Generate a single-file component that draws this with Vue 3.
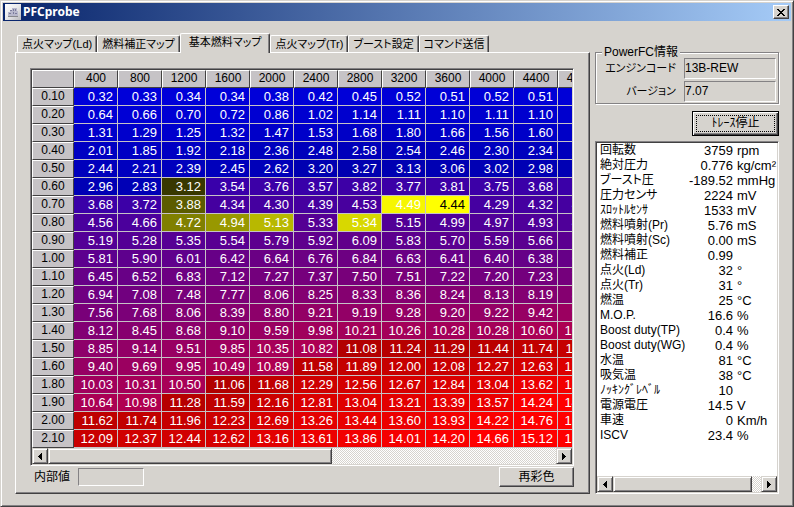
<script setup>
import { ref } from 'vue'

const tabs = ['点火マップ(Ld)', '燃料補正マップ', '基本燃料マップ', '点火マップ(Tr)', 'ブースト設定', 'コマンド送信']
const active = ref(2)
const version = ref('7.07')
const engine = ref('13B-REW')
const inner = ref('')

const rpm = [400, 800, 1200, 1600, 2000, 2400, 2800, 3200, 3600, 4000, 4400, 4800]
const rows = `0.10 0.32 0.33 0.34 0.34 0.38 0.42 0.45 0.52 0.51 0.52 0.51 0.53
0.20 0.64 0.66 0.70 0.72 0.86 1.02 1.14 1.11 1.10 1.11 1.10 1.12
0.30 1.31 1.29 1.25 1.32 1.47 1.53 1.68 1.80 1.66 1.56 1.60 1.62
0.40 2.01 1.85 1.92 2.18 2.36 2.48 2.58 2.54 2.46 2.30 2.34 2.40
0.50 2.44 2.21 2.39 2.45 2.62 3.20 3.27 3.13 3.06 3.02 2.98 2.99
0.60 2.96 2.83 3.12 3.54 3.76 3.57 3.82 3.77 3.81 3.75 3.68 3.70
0.70 3.68 3.72 3.88 4.34 4.30 4.39 4.53 4.49 4.44 4.29 4.32 4.34
0.80 4.56 4.66 4.72 4.94 5.13 5.33 5.34 5.15 4.99 4.97 4.93 4.95
0.90 5.19 5.28 5.35 5.54 5.79 5.92 6.09 5.83 5.70 5.59 5.66 5.70
1.00 5.81 5.90 6.01 6.42 6.64 6.76 6.84 6.63 6.41 6.40 6.38 6.40
1.10 6.45 6.52 6.83 7.12 7.27 7.37 7.50 7.51 7.22 7.20 7.23 7.30
1.20 6.94 7.08 7.48 7.77 8.06 8.25 8.33 8.36 8.24 8.13 8.19 8.30
1.30 7.56 7.68 8.06 8.39 8.80 9.21 9.19 9.28 9.20 9.22 9.42 9.70
1.40 8.12 8.45 8.68 9.10 9.59 9.98 10.21 10.26 10.28 10.28 10.60 10.80
1.50 8.85 9.14 9.51 9.85 10.35 10.82 11.08 11.24 11.29 11.44 11.74 11.90
1.60 9.40 9.69 9.95 10.49 10.89 11.58 11.89 12.00 12.08 12.27 12.63 12.90
1.80 10.03 10.31 10.50 11.06 11.68 12.29 12.56 12.67 12.84 13.04 13.62 13.90
1.90 10.64 10.98 11.28 11.59 12.16 12.81 13.04 13.21 13.39 13.57 14.24 14.50
2.00 11.62 11.74 11.96 12.23 12.69 13.26 13.44 13.60 13.93 14.22 14.76 15.00
2.10 12.09 12.37 12.44 12.62 13.16 13.61 13.86 14.01 14.20 14.66 15.12 15.40`
  .split('\n')
  .map((line) => {
    const [load, ...values] = line.split(' ')
    return { load, values }
  })

// Recently visited cells, brightest is the current one
const trace = {
  '0.60/2': 'rgb(56, 56, 0)',
  '0.70/2': 'rgb(92, 92, 0)',
  '0.80/2': 'rgb(128, 128, 0)',
  '0.80/3': 'rgb(152, 152, 0)',
  '0.80/4': 'rgb(184, 184, 0)',
  '0.80/6': 'rgb(216, 216, 0)',
  '0.70/7': 'rgb(246, 246, 0)',
  '0.70/8': 'rgb(255, 255, 0)',
}

function cellColor(load, col, text) {
  const hit = trace[`${load}/${col}`]
  if (hit) return hit
  const v = Number(text)
  if (v < 3.3) return `rgb(0, 0, ${Math.round(222 - v * 14)})`
  if (v < 11) return `rgb(${Math.round(v * 16)}, 0, ${Math.round(212 - v * 12)})`
  return `rgb(${Math.min(255, Math.round(176 + (v - 11) * 23))}, 0, 0)`
}

const sensors = [
  ['回転数', '3759', 'rpm'],
  ['絶対圧力', '0.776', 'kg/cm²'],
  ['ブースト圧', '-189.52', 'mmHg'],
  ['圧力センサ', '2224', 'mV'],
  ['ｽﾛｯﾄﾙｾﾝｻ', '1533', 'mV'],
  ['燃料噴射(Pr)', '5.76', 'mS'],
  ['燃料噴射(Sc)', '0.00', 'mS'],
  ['燃料補正', '0.99', ''],
  ['点火(Ld)', '32', '°'],
  ['点火(Tr)', '31', '°'],
  ['燃温', '25', '°C'],
  ['M.O.P.', '16.6', '%'],
  ['Boost duty(TP)', '0.4', '%'],
  ['Boost duty(WG)', '0.4', '%'],
  ['水温', '81', '°C'],
  ['吸気温', '38', '°C'],
  ['ﾉｯｷﾝｸﾞﾚﾍﾞﾙ', '10', ''],
  ['電源電圧', '14.5', 'V'],
  ['車速', '0', 'Km/h'],
  ['ISCV', '23.4', '%'],
]
</script>

<template>
  <div class="window">
    <header class="titlebar">
      <svg class="app-icon" viewBox="0 0 16 16" aria-hidden="true">
        <defs>
          <linearGradient id="plate" x1="0" y1="0" x2="1" y2="1">
            <stop offset="0" stop-color="#fff" />
            <stop offset="0.5" stop-color="#e8e8ea" />
            <stop offset="1" stop-color="#b8b8bc" />
          </linearGradient>
        </defs>
        <rect width="16" height="16" fill="url(#plate)" />
        <path d="M3 8H5V6H7V4H12V7H13V12H3Z" fill="#b8b8cc" />
        <path d="M5 6H7V7H5ZM8 5H9V7H8ZM10 5H11V7H10ZM4 9H6V10H4ZM8 8H9V10H8ZM10 9H12V10H10Z" fill="#7c7c9c" />
        <path d="M3 12H13V13H3Z" fill="#88888c" />
      </svg>
      <h1>PFCprobe</h1>
      <button class="close" type="button" aria-label="閉じる">
        <svg viewBox="0 0 8 7" shape-rendering="crispEdges">
          <path d="M0 0H2V1H3V2H5V1H6V0H8V1H7V2H6V3H5V4H6V5H7V6H8V7H6V6H5V5H3V6H2V7H0V6H1V5H2V4H3V3H2V2H1V1H0Z" />
        </svg>
      </button>
    </header>

    <main class="body">
      <section class="left">
        <nav class="tabs" role="tablist">
          <button
            v-for="(tab, i) in tabs"
            :key="tab"
            type="button"
            role="tab"
            class="tab"
            :class="{ active: i === active }"
            :aria-selected="i === active"
            @click="active = i"
          >{{ tab }}</button>
        </nav>
        <div class="panel">
          <div class="grid-frame">
            <div class="grid-view">
              <table class="grid">
                <thead>
                  <tr>
                    <th class="corner"></th>
                    <th v-for="r in rpm" :key="r" scope="col">{{ r }}</th>
                  </tr>
                </thead>
                <tbody>
                  <tr v-for="row in rows" :key="row.load">
                    <th scope="row">{{ row.load }}</th>
                    <td
                      v-for="(v, c) in row.values"
                      :key="c"
                      :class="{ current: row.load === '0.70' && c === 8 }"
                      :style="{ backgroundColor: cellColor(row.load, c, v) }"
                    >{{ v }}</td>
                  </tr>
                </tbody>
              </table>
            </div>
            <div class="scrollbar">
              <button type="button" class="arrow" aria-label="左へ">
                <svg viewBox="0 0 4 7" shape-rendering="crispEdges"><path d="M3 0H4V7H3V6H2V5H1V4H0V3H1V2H2V1H3Z" /></svg>
              </button>
              <div class="track"><div class="thumb map-thumb"></div></div>
              <button type="button" class="arrow" aria-label="右へ">
                <svg viewBox="0 0 4 7" shape-rendering="crispEdges"><path d="M0 0H1V1H2V2H3V3H4V4H3V5H2V6H1V7H0Z" /></svg>
              </button>
            </div>
          </div>
          <div class="panel-foot">
            <label for="inner">内部値</label>
            <input id="inner" v-model="inner" class="field inner" readonly />
            <button type="button" class="button recolor">再彩色</button>
          </div>
        </div>
      </section>

      <aside class="right">
        <fieldset class="info">
          <legend>PowerFC情報</legend>
          <label for="engine">エンジンコード</label>
          <input id="engine" v-model="engine" class="field" readonly />
          <label for="version">バージョン</label>
          <input id="version" v-model="version" class="field" readonly />
        </fieldset>
        <button type="button" class="button trace"><span>ﾄﾚｰｽ停止</span></button>
        <div class="list">
          <table class="sensors">
            <tbody>
              <tr v-for="[name, value, unit] in sensors" :key="name">
                <th scope="row">{{ name }}</th>
                <td class="value">{{ value }}</td>
                <td class="unit">{{ unit }}</td>
              </tr>
            </tbody>
          </table>
          <div class="scrollbar">
            <button type="button" class="arrow" aria-label="左へ">
              <svg viewBox="0 0 4 7" shape-rendering="crispEdges"><path d="M3 0H4V7H3V6H2V5H1V4H0V3H1V2H2V1H3Z" /></svg>
            </button>
            <div class="track"><div class="thumb list-thumb"></div></div>
            <button type="button" class="arrow" aria-label="右へ">
              <svg viewBox="0 0 4 7" shape-rendering="crispEdges"><path d="M0 0H1V1H2V2H3V3H4V4H3V5H2V6H1V7H0Z" /></svg>
            </button>
          </div>
        </div>
      </aside>
    </main>
  </div>
</template>

<style>
body {
  margin: 0;
  background: #d6d3ce;
}
</style>

<style scoped>
button,
input {
  font: inherit;
  font-feature-settings: inherit;
  color: inherit;
  margin: 0;
  border-radius: 0;
}
.window {
  --face: #d6d3ce;
  --shade: #848284;
  --dark: #424142;
  box-sizing: border-box;
  min-height: 100vh;
  display: flex;
  flex-direction: column;
  padding: 1px;
  background: var(--face);
  border: 1px solid;
  border-color: var(--face) var(--dark) var(--dark) var(--face);
  box-shadow: inset 1px 1px #fff, inset -1px -1px var(--shade);
  font: 12px/15px "Liberation Sans", "Noto Sans CJK JP", sans-serif;
  font-feature-settings: "palt";
  color: #000;
}
.titlebar {
  display: flex;
  align-items: center;
  height: 18px;
  margin: 1px;
  padding: 0 2px;
  background: linear-gradient(to right, #08246b, #a5cbf7);
}
.app-icon {
  width: 16px;
  height: 16px;
}
h1 {
  flex: 1;
  margin: 0 0 0 2px;
  font: bold 12px/16px "Noto Sans", "DejaVu Sans", sans-serif;
  color: #fff;
}
.close {
  display: flex;
  align-items: center;
  justify-content: center;
  width: 16px;
  height: 14px;
  padding: 0;
  background: var(--face);
  border: 1px solid;
  border-color: #fff var(--dark) var(--dark) #fff;
  box-shadow: inset -1px -1px var(--shade);
}
.close svg {
  width: 8px;
  height: 7px;
}
.body {
  flex: 1;
  display: flex;
  gap: 5px;
  padding: 11px 13px;
}
.left {
  flex: 1;
  min-width: 0;
  display: flex;
  flex-direction: column;
}
.tabs {
  display: flex;
  align-items: flex-end;
  height: 19px;
  padding-left: 2px;
}
.tab {
  height: 17px;
  padding: 0 4px;
  background: var(--face);
  border: 1px solid #fff;
  border-right-color: var(--dark);
  border-bottom: 0;
  border-radius: 2px 2px 0 0;
  box-shadow: inset -1px 0 var(--shade);
  font-size: 11px;
  line-height: 15px;
  white-space: nowrap;
}
.tab.active {
  z-index: 1;
  height: 20px;
  margin-bottom: -1px;
  padding: 0 8px 2px;
}
.panel {
  flex: 1;
  display: flex;
  flex-direction: column;
  padding: 15px 15px 4px 14px;
  border: 1px solid;
  border-color: #fff var(--dark) var(--dark) #fff;
  box-shadow: inset -1px -1px var(--shade);
}
.grid-frame,
.list {
  border: 1px solid;
  border-color: var(--shade) #fff #fff var(--shade);
  box-shadow: inset 1px 1px var(--dark), inset -1px -1px var(--face);
  padding: 1px;
}
.grid-view {
  overflow: hidden;
}
.grid {
  table-layout: fixed;
  width: 570px;
  border-collapse: separate;
  border-spacing: 0;
}
.grid th,
.grid td {
  box-sizing: border-box;
  width: 44px;
  height: 18px;
  padding: 0;
  line-height: 16px;
}
.grid th {
  padding-bottom: 2px;
  background: #c6c3c6;
  border: 1px solid;
  border-color: #fff var(--dark) var(--dark) #fff;
  font-size: 12px;
  font-weight: normal;
  text-align: center;
  line-height: 14px;
}
.grid .corner {
  width: 42px;
}
.grid td {
  padding-right: 4px;
  border: 1px solid #c6c3c6;
  border-width: 0 1px 1px 0;
  font-size: 13px;
  text-align: right;
  color: #fff;
}
.grid td.current {
  color: #000;
}
.scrollbar {
  display: flex;
  height: 16px;
}
.arrow {
  flex: none;
  display: flex;
  align-items: center;
  justify-content: center;
  width: 16px;
  padding: 0;
  background: var(--face);
  border: 1px solid;
  border-color: var(--face) var(--dark) var(--dark) var(--face);
  box-shadow: inset 1px 1px #fff, inset -1px -1px var(--shade);
}
.arrow svg {
  width: 4px;
  height: 7px;
}
.track {
  flex: 1;
  display: flex;
  background: repeating-conic-gradient(#fff 0 25%, var(--face) 0 50%) 0 0 / 2px 2px;
}
.thumb {
  box-sizing: border-box;
  background: var(--face);
  border: 1px solid;
  border-color: var(--face) var(--dark) var(--dark) var(--face);
  box-shadow: inset 1px 1px #fff, inset -1px -1px var(--shade);
}
.map-thumb {
  width: 56%;
}
.list-thumb {
  width: 94%;
}
.panel-foot {
  display: flex;
  align-items: center;
  gap: 8px;
  padding-left: 4px;
  padding-top: 1px;
}
.field {
  box-sizing: border-box;
  min-width: 0;
  width: 100%;
  height: 21px;
  padding: 0 0 2px;
  background: transparent;
  border: 1px solid;
  border-color: var(--shade) #fff #fff var(--shade);
  outline: 0;
}
.inner {
  width: 66px;
  height: 18px;
}
.button {
  padding: 0;
  background: var(--face);
  border: 1px solid;
  border-color: #fff var(--dark) var(--dark) #fff;
  box-shadow: inset -1px -1px var(--shade);
}
.recolor {
  width: 75px;
  height: 20px;
  margin-left: auto;
}
.right {
  flex: none;
  width: 184px;
  display: flex;
  flex-direction: column;
  padding-top: 13px;
}
.info {
  display: grid;
  grid-template-columns: 80px 92px;
  column-gap: 8px;
  row-gap: 2px;
  align-items: center;
  margin: 0 0 7px;
  padding: 0 2px 1px 0;
  border: 1px solid var(--shade);
  box-shadow: 1px 1px #fff, inset 1px 1px #fff;
}
.info legend {
  height: 12px;
  margin-left: 6px;
  padding: 0 2px;
  line-height: 12px;
  background: var(--face);
}
.info label {
  font-size: 11px;
  text-align: right;
}
.trace {
  align-self: flex-end;
  display: flex;
  width: 87px;
  height: 25px;
  margin-bottom: 5px;
  padding: 3px;
  border: 1px solid #000;
  box-shadow: inset 1px 1px #fff, inset -1px -1px var(--dark), inset -2px -2px var(--shade);
}
.trace span {
  flex: 1;
  border: 1px dotted #000;
  line-height: 15px;
}
.list {
  flex: 1;
  display: flex;
  flex-direction: column;
  justify-content: space-between;
  background: #fff;
}
.sensors {
  width: 100%;
  border-spacing: 0;
}
.sensors th,
.sensors td {
  height: 15px;
  padding: 0;
  white-space: nowrap;
}
.sensors th {
  padding-left: 3px;
  font-weight: normal;
  text-align: left;
}
.sensors td {
  font-size: 13px;
}
.value {
  text-align: right;
}
.sensors .unit {
  width: 40px;
  padding-left: 4px;
}
</style>
